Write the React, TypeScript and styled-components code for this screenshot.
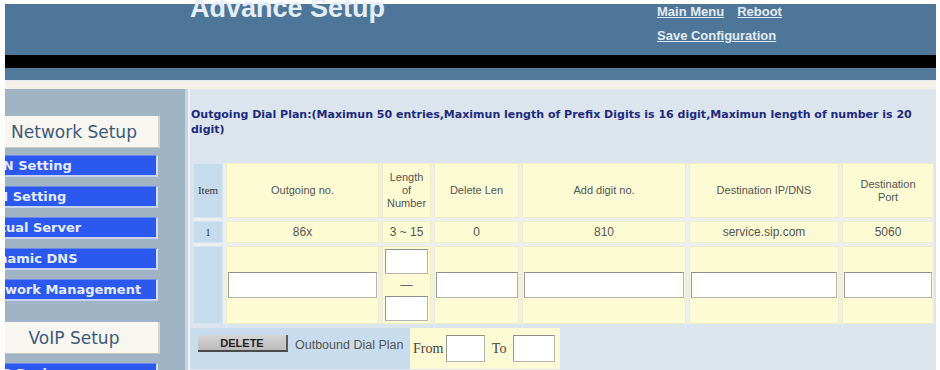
import React from 'react';
import styled, { createGlobalStyle } from 'styled-components';

const GlobalStyle = createGlobalStyle`
    html, body {
        margin: 0;
        padding: 0;
        background: #ffffff;
    }
    body {
        font-family: "Liberation Sans", Arial, sans-serif;
    }
`;

const Page = styled('div')`
    width: 940px;
    height: 370px;
    padding: 4px 4px 0 5px;
    box-sizing: border-box;
    overflow: hidden;
`;

const Header = styled('div')`
    display: flex;
    height: 51px;
    background: #4e7698;
`;

const TitleBox = styled('div')`
    width: 652px;
    padding-left: 185px;
    box-sizing: border-box;
`;

const Title = styled('h1')`
    margin: -9px 0 0 0;
    font-family: "Liberation Sans", Arial, sans-serif;
    font-weight: 700;
    font-size: 27px;
    line-height: 26px;
    color: #e4eef8;
    white-space: nowrap;
`;

const Links = styled('div')`
    display: flex;
    flex-direction: column;
    gap: 9px;
`;

const LinkRow = styled('div')`
    display: flex;
    gap: 13px;
`;

const TopLink = styled('a')`
    font-family: "Liberation Sans", Arial, sans-serif;
    font-weight: 700;
    font-size: 13px;
    line-height: 15px;
    color: #e4ecf4;
    text-decoration: underline;
    white-space: nowrap;
`;

const BlackBar = styled('div')`
    height: 13px;
    background: #000000;
`;

const BlueStrip = styled('div')`
    height: 12px;
    background: #527a9b;
`;

const CreamGap = styled('div')`
    height: 9px;
    background: #f6f1e8;
    border-top: 1px solid #e6eef4;
    box-sizing: border-box;
`;

const Body = styled('div')`
    display: flex;
    height: 290px;
    background: #c8d3dd;
    overflow: hidden;
`;

const Sidebar = styled('div')`
    width: 180px;
    flex-shrink: 0;
    background: #a0b4c6;
    overflow: hidden;
`;

// the menu is scrolled sideways in the original, so its left part is cut off
const SideColumn = styled('div')`
    display: flex;
    flex-direction: column;
    width: 183px;
    margin-left: -28px;
    padding-top: 27px;
`;

const SectionBox = styled('div')<{ $gapTop: number }>`
    height: 32px;
    margin-top: ${(p) => p.$gapTop}px;
    padding-left: 13px;
    background: #f7f6f0;
    border-right: 2px solid #d6d6cc;
    border-bottom: 1px solid #c8c8c0;
    box-sizing: border-box;
    display: flex;
    align-items: center;
    justify-content: center;
    font-family: "DejaVu Sans", Verdana, sans-serif;
    font-size: 17px;
    color: #3d5a7c;
`;

const NavItem = styled('div')<{ $gapTop: number }>`
    height: 22px;
    margin-top: ${(p) => p.$gapTop}px;
    margin-right: 2px;
    padding-left: 2px;
    background: #2b58ef;
    border-top: 1px solid #6c8ae8;
    border-right: 2px solid #d4def8;
    border-bottom: 2px solid #c6d2f0;
    box-sizing: border-box;
    display: flex;
    align-items: center;
    font-family: "DejaVu Sans", Verdana, sans-serif;
    font-weight: 700;
    font-size: 13px;
    color: #e6ecff;
    white-space: nowrap;
    overflow: hidden;
`;

const Main = styled('div')`
    flex: 1;
    margin-left: 3px;
    border-left: 2px solid #eef3f7;
    background: #dce4ed;
    display: flex;
    flex-direction: column;
`;

const PlanTitle = styled('div')`
    padding: 18px 8px 0 1px;
    font-family: "DejaVu Sans", Verdana, sans-serif;
    font-weight: 700;
    font-size: 11px;
    line-height: 15px;
    color: #1d2b80;
`;

const PlanTable = styled('div')`
    display: grid;
    grid-template-columns: 30px 153px 49px 85px 164px 150px 92px;
    grid-template-rows: 55px 22px 78px;
    gap: 3px;
    margin: 26px 0 0 3px;
    width: 741px;
    background: #eceff0;
`;

const Cell = styled('div')<{ $kind?: 'item' | 'plain' }>`
    display: flex;
    flex-direction: column;
    align-items: center;
    justify-content: center;
    text-align: center;
    background: ${(p) => (p.$kind === 'item' ? '#c6dbec' : '#fdfbd3')};
    border: 1px solid ${(p) => (p.$kind === 'item' ? '#d6e4f0' : '#f0edc6')};
    box-sizing: border-box;
    font-family: "Liberation Sans", Arial, sans-serif;
    font-size: 11px;
    line-height: 13px;
    color: #555555;
`;

const ItemText = styled('span')`
    font-family: "Liberation Serif", "Times New Roman", serif;
    font-size: 11px;
    color: #333333;
`;

const DataText = styled('span')`
    font-size: 12px;
    color: #555555;
`;

const TextInput = styled('input')<{ $w: number; $h?: number }>`
    width: ${(p) => p.$w}px;
    height: ${(p) => p.$h ?? 26}px;
    box-sizing: border-box;
    border: 1px solid #b4b4b4;
    border-top-color: #8e8e8e;
    border-left-color: #9a9a9a;
    background: #ffffff;
    padding: 0 2px;
    margin: 0;
    outline: none;
`;

const Dash = styled('span')`
    font-size: 12px;
    color: #666666;
    line-height: 22px;
`;

const FooterRow = styled('div')`
    display: flex;
    height: 41px;
    margin-top: 4px;
`;

const DeleteArea = styled('div')`
    width: 220px;
    background: #c8dcee;
    display: flex;
    align-items: flex-start;
    padding: 7px 0 0 8px;
    box-sizing: border-box;
    gap: 7px;
`;

const DeleteButton = styled('button')`
    width: 90px;
    height: 17px;
    padding: 0;
    background: linear-gradient(#d4d4d4, #bcbcbc);
    border: none;
    border-bottom: 2px solid #4a4a4a;
    border-right: 2px solid #5a5a5a;
    font-family: "Liberation Sans", Arial, sans-serif;
    font-weight: 700;
    font-size: 11px;
    color: #222222;
`;

const FooterText = styled('span')`
    margin-top: 3px;
    font-family: "Liberation Sans", Arial, sans-serif;
    font-size: 12.5px;
    line-height: 15px;
    color: #555555;
    white-space: nowrap;
`;

const RangeArea = styled('div')`
    width: 150px;
    background: #fdfbd3;
    display: flex;
    align-items: center;
    padding-left: 3px;
    box-sizing: border-box;
    gap: 3px;
`;

const SerifLabel = styled('span')<{ $pad: number }>`
    font-family: "Liberation Serif", "Times New Roman", serif;
    font-size: 14px;
    color: #444444;
    margin-right: ${(p) => p.$pad}px;
`;

const navItems = ['WAN Setting', 'LAN Setting', 'Virtual Server', 'Dynamic DNS', 'Network Management'];

const headers = ['Outgoing no.', 'Length of Number', 'Delete Len', 'Add digit no.', 'Destination IP/DNS', 'Destination Port'];

const rows = [
    { item: '1', outgoing: '86x', length: '3 ~ 15', del: '0', add: '810', dest: 'service.sip.com', port: '5060' },
];

const App = () => (
    <>
        <GlobalStyle />
        <Page>
            <Header>
                <TitleBox>
                    <Title>Advance Setup</Title>
                </TitleBox>
                <Links>
                    <LinkRow>
                        <TopLink href="#">Main Menu</TopLink>
                        <TopLink href="#">Reboot</TopLink>
                    </LinkRow>
                    <TopLink href="#">Save Configuration</TopLink>
                </Links>
            </Header>
            <BlackBar />
            <BlueStrip />
            <CreamGap />
            <Body>
                <Sidebar>
                    <SideColumn>
                        <SectionBox $gapTop={0}>Network Setup</SectionBox>
                        {navItems.map((name, i) => (
                            <NavItem key={name} $gapTop={i === 0 ? 7 : 9}>{name}</NavItem>
                        ))}
                        <SectionBox $gapTop={21}>VoIP Setup</SectionBox>
                        <NavItem $gapTop={9}>VoIP Basic</NavItem>
                    </SideColumn>
                </Sidebar>
                <Main>
                    <PlanTitle>
                        Outgoing Dial Plan:(Maximun 50 entries,Maximun length of Prefix Digits is 16 digit,Maximun length of number is 20 digit)
                    </PlanTitle>
                    <PlanTable>
                        <Cell $kind="item"><ItemText>Item</ItemText></Cell>
                        {headers.map((h) => (
                            <Cell key={h}>{h === 'Length of Number' ? (<><span>Length</span><span>of</span><span>Number</span></>) : h === 'Destination Port' ? (<><span>Destination</span><span>Port</span></>) : h}</Cell>
                        ))}
                        {rows.map((r) => (
                            <React.Fragment key={r.item}>
                                <Cell $kind="item"><ItemText>{r.item}</ItemText></Cell>
                                <Cell><DataText>{r.outgoing}</DataText></Cell>
                                <Cell><DataText>{r.length}</DataText></Cell>
                                <Cell><DataText>{r.del}</DataText></Cell>
                                <Cell><DataText>{r.add}</DataText></Cell>
                                <Cell><DataText>{r.dest}</DataText></Cell>
                                <Cell><DataText>{r.port}</DataText></Cell>
                            </React.Fragment>
                        ))}
                        <Cell $kind="item" />
                        <Cell><TextInput $w={149} /></Cell>
                        <Cell>
                            <TextInput $w={43} $h={25} />
                            <Dash>—</Dash>
                            <TextInput $w={43} $h={25} />
                        </Cell>
                        <Cell><TextInput $w={82} /></Cell>
                        <Cell><TextInput $w={160} /></Cell>
                        <Cell><TextInput $w={146} /></Cell>
                        <Cell><TextInput $w={88} /></Cell>
                    </PlanTable>
                    <FooterRow>
                        <DeleteArea>
                            <DeleteButton>DELETE</DeleteButton>
                            <FooterText>Outbound Dial Plan</FooterText>
                        </DeleteArea>
                        <RangeArea>
                            <SerifLabel $pad={0}>From</SerifLabel>
                            <TextInput $w={39} $h={27} />
                            <SerifLabel $pad={4}>&nbsp;To</SerifLabel>
                            <TextInput $w={42} $h={27} />
                        </RangeArea>
                    </FooterRow>
                </Main>
            </Body>
        </Page>
    </>
);

export default App;
